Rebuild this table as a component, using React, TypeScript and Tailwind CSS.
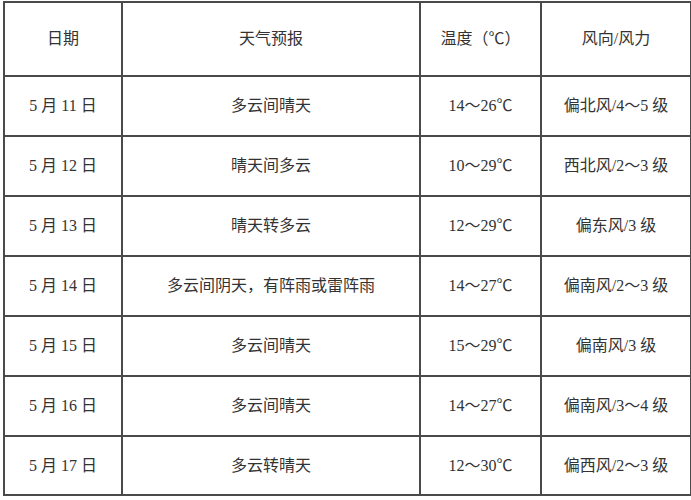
import React from "react";

const rows = [
  ["5 月 11 日", "多云间晴天", "14～26℃", "偏北风/4～5 级"],
  ["5 月 12 日", "晴天间多云", "10～29℃", "西北风/2～3 级"],
  ["5 月 13 日", "晴天转多云", "12～29℃", "偏东风/3 级"],
  ["5 月 14 日", "多云间阴天，有阵雨或雷阵雨", "14～27℃", "偏南风/2～3 级"],
  ["5 月 15 日", "多云间晴天", "15～29℃", "偏南风/3 级"],
  ["5 月 16 日", "多云间晴天", "14～27℃", "偏南风/3～4 级"],
  ["5 月 17 日", "多云转晴天", "12～30℃", "偏西风/2～3 级"],
];

const cell = "border-2 border-[#4a4a4a] text-center align-middle p-0";

const App: React.FC = () => {
  return (
    <div className="w-[691px] h-[500px] bg-white pt-[1px] pl-[3px]">
      <table
        className="border-collapse table-fixed w-[687px] text-[16px] text-[#333]"
        style={{ fontFamily: "'Liberation Serif', 'Noto Sans CJK SC', serif" }}
      >
        <colgroup>
          <col className="w-[118px]" />
          <col className="w-[298px]" />
          <col className="w-[121px]" />
          <col className="w-[150px]" />
        </colgroup>
        <thead>
          <tr className="h-[74px]">
            <th className={cell + " font-normal"}>日期</th>
            <th className={cell + " font-normal"}>天气预报</th>
            <th className={cell + " font-normal"}>温度（℃）</th>
            <th className={cell + " font-normal"}>风向/风力</th>
          </tr>
        </thead>
        <tbody>
          {rows.map((r, i) => (
            <tr key={i} className={i === rows.length - 1 ? "h-[59px]" : "h-[60px]"}>
              {r.map((c, j) => (
                <td key={j} className={cell}>
                  {c}
                </td>
              ))}
            </tr>
          ))}
        </tbody>
      </table>
    </div>
  );
};

export default App;
